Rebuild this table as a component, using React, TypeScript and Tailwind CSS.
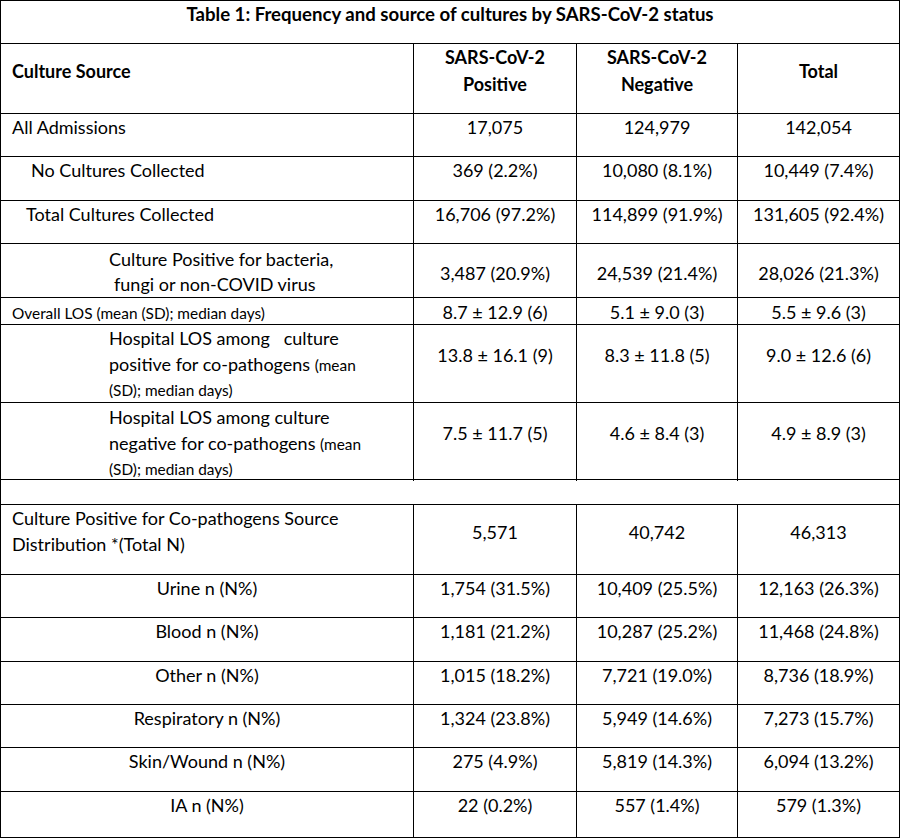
import React from "react";

type Row = {
  h: string;
  label: React.ReactNode;
  labelClass: string;
  values: string[];
  valueClass: string;
};

const rows: Row[] = [
  {
    h: "h-[43px]",
    label: "All Admissions",
    labelClass: "pl-[11px]",
    values: ["17,075", "124,979", "142,054"],
    valueClass: "",
  },
  {
    h: "h-[44px]",
    label: "No Cultures Collected",
    labelClass: "pl-[30px]",
    values: ["369 (2.2%)", "10,080 (8.1%)", "10,449 (7.4%)"],
    valueClass: "",
  },
  {
    h: "h-[43px]",
    label: "Total Cultures Collected",
    labelClass: "pl-[25px]",
    values: ["16,706 (97.2%)", "114,899 (91.9%)", "131,605 (92.4%)"],
    valueClass: "",
  },
  {
    h: "h-[54px]",
    label: (
      <>
        <div>Culture Positive for bacteria,</div>
        <div className="pl-[5px]">fungi or non-COVID virus</div>
      </>
    ),
    labelClass: "pl-[108px] pt-[3px] leading-[25px]",
    values: ["3,487 (20.9%)", "24,539 (21.4%)", "28,026 (21.3%)"],
    valueClass: "pt-[16px]",
  },
  {
    h: "h-[27px]",
    label: <span className="text-[15.4px]">Overall LOS (mean (SD); median days)</span>,
    labelClass: "pl-[11px] pt-[1px] leading-[26px]",
    values: ["8.7 ± 12.9 (6)", "5.1 ± 9.0 (3)", "5.5 ± 9.6 (3)"],
    valueClass: "pt-[1px] leading-[26px]",
  },
  {
    h: "h-[78px]",
    label: (
      <>
        <div className="whitespace-pre">Hospital LOS among   culture</div>
        <div>
          positive for co-pathogens <span className="text-[15.4px]">(mean</span>
        </div>
        <div className="text-[15.4px] leading-[24px]">(SD); median days)</div>
      </>
    ),
    labelClass: "pl-[108px]",
    values: ["13.8 ± 16.1 (9)", "8.3 ± 11.8 (5)", "9.0 ± 12.6 (6)"],
    valueClass: "pt-[17px]",
  },
  {
    h: "h-[77px]",
    label: (
      <>
        <div>Hospital LOS among culture</div>
        <div>
          negative for co-pathogens <span className="text-[15.4px]">(mean</span>
        </div>
        <div className="text-[15.4px] leading-[24px]">(SD); median days)</div>
      </>
    ),
    labelClass: "pl-[108px] pt-[1px]",
    values: ["7.5 ± 11.7 (5)", "4.6 ± 8.4 (3)", "4.9 ± 8.9 (3)"],
    valueClass: "pt-[17px]",
  },
];

const sourceRows: [string, string, string, string, string][] = [
  ["h-[43px]", "Urine n (N%)", "1,754 (31.5%)", "10,409 (25.5%)", "12,163 (26.3%)"],
  ["h-[44px]", "Blood n (N%)", "1,181 (21.2%)", "10,287 (25.2%)", "11,468 (24.8%)"],
  ["h-[43px]", "Other n (N%)", "1,015 (18.2%)", "7,721 (19.0%)", "8,736 (18.9%)"],
  ["h-[43px]", "Respiratory n (N%)", "1,324 (23.8%)", "5,949 (14.6%)", "7,273 (15.7%)"],
  ["h-[44px]", "Skin/Wound n (N%)", "275 (4.9%)", "5,819 (14.3%)", "6,094 (13.2%)"],
  ["h-[46px]", "IA n (N%)", "22 (0.2%)", "557 (1.4%)", "579 (1.3%)"],
];

const cols = "grid grid-cols-[413px_163px_161px_161px]";

function DataRow({ h, label, labelClass, values, valueClass }: Row) {
  return (
    <div className={`${cols} ${h} border-b border-black`}>
      <div className={`border-r border-black ${labelClass}`}>{label}</div>
      {values.map((v, i) => (
        <div
          key={i}
          className={`text-center ${valueClass} ${i < 2 ? "border-r border-black" : ""}`}
        >
          {v}
        </div>
      ))}
    </div>
  );
}

export default function App() {
  return (
    <div
      className="w-[900px] bg-white text-black text-[18px] leading-[26px]"
      style={{ fontFamily: "Lato, 'Open Sans', sans-serif" }}
    >
      <div className="border border-black border-b-0">
        {/* title */}
        <div className="h-[43px] border-b border-black text-center font-bold text-[18.6px] leading-[26px]">
          Table 1: Frequency and source of cultures by SARS-CoV-2 status
        </div>

        {/* header */}
        <div className={`${cols} h-[70px] border-b border-black font-bold`}>
          <div className="border-r border-black pl-[11px] pt-[14px]">Culture Source</div>
          <div className="border-r border-black text-center leading-[27px]">
            <div>SARS-CoV-2</div>
            <div>Positive</div>
          </div>
          <div className="border-r border-black text-center leading-[27px]">
            <div>SARS-CoV-2</div>
            <div>Negative</div>
          </div>
          <div className="text-center pt-[14px]">Total</div>
        </div>

        {rows.map((r, i) => (
          <DataRow key={i} {...r} />
        ))}

        {/* spacer */}
        <div className="h-[25px] border-b border-black" />

        <DataRow
          h="h-[70px]"
          label={
            <>
              <div>Culture Positive for Co-pathogens Source</div>
              <div>Distribution *(Total N)</div>
            </>
          }
          labelClass="pl-[11px]"
          values={["5,571", "40,742", "46,313"]}
          valueClass="pt-[14px]"
        />

        {sourceRows.map(([h, label, a, b, c]) => (
          <div key={label} className={`${cols} ${h} border-b border-black text-center`}>
            <div className="border-r border-black">{label}</div>
            <div className="border-r border-black">{a}</div>
            <div className="border-r border-black">{b}</div>
            <div>{c}</div>
          </div>
        ))}
      </div>
    </div>
  );
}
